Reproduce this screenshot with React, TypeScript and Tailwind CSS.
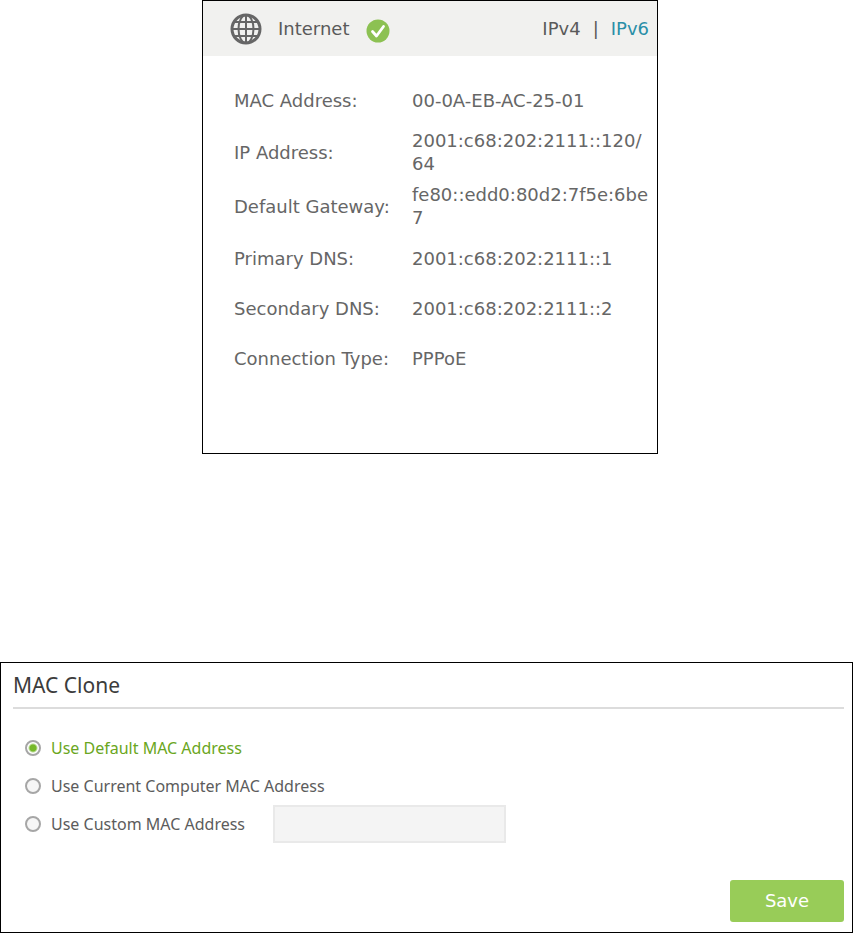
import { useState } from "react";

const STATUS_ROWS = [
  { label: "MAC Address:", value: "00-0A-EB-AC-25-01" },
  { label: "IP Address:", value: "2001:c68:202:2111::120/\n64" },
  { label: "Default Gateway:", value: "fe80::edd0:80d2:7f5e:6be\n7" },
  { label: "Primary DNS:", value: "2001:c68:202:2111::1" },
  { label: "Secondary DNS:", value: "2001:c68:202:2111::2" },
  { label: "Connection Type:", value: "PPPoE" },
];

const MAC_OPTIONS = [
  { id: "default", label: "Use Default MAC Address" },
  { id: "current", label: "Use Current Computer MAC Address" },
  { id: "custom", label: "Use Custom MAC Address" },
] as const;

type MacMode = (typeof MAC_OPTIONS)[number]["id"];

function GlobeIcon() {
  return (
    <svg
      viewBox="0 0 32 32"
      className="size-8 shrink-0"
      fill="none"
      stroke="#666666"
      aria-hidden="true"
    >
      <circle cx="16" cy="16" r="14" strokeWidth="3" />
      <ellipse cx="16" cy="16" rx="7.5" ry="14" strokeWidth="2" />
      <path d="M16 2v28M2 16h28M5 9h22M5 23h22" strokeWidth="2" />
    </svg>
  );
}

function CheckIcon() {
  return (
    <svg viewBox="0 0 24 24" className="size-6 shrink-0" aria-label="Connected" role="img">
      <circle cx="12" cy="12" r="11.5" fill="#8cc152" />
      <path
        d="M6.5 12.5l4 4.5 7-9.5"
        fill="none"
        stroke="#ffffff"
        strokeWidth="2.8"
        strokeLinecap="round"
        strokeLinejoin="round"
      />
    </svg>
  );
}

function InternetStatus() {
  return (
    <section className="min-h-[454px] w-full max-w-[456px] border border-black bg-white text-lg text-[#666666]">
      <header className="flex h-[55px] items-center bg-[#f1f1ef] pr-2 pl-[27px] text-[#5a5a5a]">
        <GlobeIcon />
        <h2 className="ml-4">Internet</h2>
        <span className="ml-[17px] pt-1">
          <CheckIcon />
        </span>
        <nav className="ml-auto flex gap-3">
          <a href="#ipv4">IPv4</a>
          <span>|</span>
          <a href="#ipv6" className="text-[#2a8fa8]">
            IPv6
          </a>
        </nav>
      </header>

      <dl className="pt-[19px] pl-[31px] leading-[23px]">
        {STATUS_ROWS.map((row) => (
          <div key={row.label} className="flex min-h-[50px] items-center py-1">
            <dt className="w-[178px] shrink-0 whitespace-nowrap">{row.label}</dt>
            <dd className="whitespace-pre-line">{row.value}</dd>
          </div>
        ))}
      </dl>
    </section>
  );
}

function MacClone() {
  const [mode, setMode] = useState<MacMode>("default");
  const [customMac, setCustomMac] = useState("");

  return (
    <form
      className="border border-black bg-white pt-2 pr-2 pb-2.5 pl-3 font-['Noto_Sans',sans-serif]"
      onSubmit={(e) => e.preventDefault()}
    >
      <h2 className="border-b-2 border-[#dcdcdc] pb-2 text-[21px] leading-7 text-[#3c3c3c]">
        MAC Clone
      </h2>

      <div className="mt-5 pl-3">
        {MAC_OPTIONS.map((option) => (
          <div key={option.id} className="flex h-[38px] items-center">
            <input
              type="radio"
              id={`mac-${option.id}`}
              name="mac-mode"
              checked={mode === option.id}
              onChange={() => setMode(option.id)}
              className="size-4 shrink-0 appearance-none rounded-full border-2 border-[#a6a6a6] bg-[#f6f6f6] checked:bg-[radial-gradient(circle,#76b82a_0_3px,#ffffff_5px)]"
            />
            <label
              htmlFor={`mac-${option.id}`}
              className={
                mode === option.id
                  ? "ml-2.5 text-base text-[#6aa621]"
                  : "ml-2.5 text-base text-[#5c5c5c]"
              }
            >
              {option.label}
            </label>
            {option.id === "custom" && (
              <input
                type="text"
                aria-label="Custom MAC address"
                value={customMac}
                disabled={mode !== "custom"}
                onChange={(e) => setCustomMac(e.target.value)}
                className="ml-7 h-[38px] w-[233px] border-2 border-[#e9e9e9] bg-[#f4f4f4] px-2"
              />
            )}
          </div>
        ))}
      </div>

      <div className="mt-[37px] flex justify-end">
        <button
          type="submit"
          className="h-[42px] w-[114px] rounded-[3px] bg-[#98cc58] font-['DejaVu_Sans',sans-serif] text-lg text-white"
        >
          Save
        </button>
      </div>
    </form>
  );
}

export default function App() {
  return (
    <main className="bg-white font-['DejaVu_Sans',Verdana,sans-serif]">
      <div className="flex justify-center pl-[7px]">
        <InternetStatus />
      </div>
      <div className="mt-52">
        <MacClone />
      </div>
    </main>
  );
}
